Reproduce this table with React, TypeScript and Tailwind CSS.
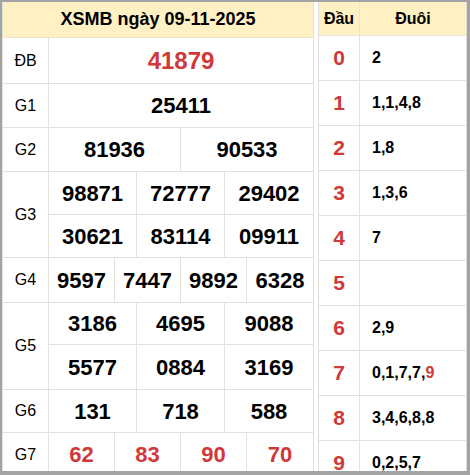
import React from 'react';

const RED = 'text-[#d0383a]';

type Prize = { label: string; rows: string[][]; heights: number[]; red?: boolean; big?: boolean };

const prizes: Prize[] = [
  { label: 'ĐB', rows: [['41879']], heights: [46], red: true, big: true },
  { label: 'G1', rows: [['25411']], heights: [44] },
  { label: 'G2', rows: [['81936', '90533']], heights: [44] },
  { label: 'G3', rows: [['98871', '72777', '29402'], ['30621', '83114', '09911']], heights: [43, 43] },
  { label: 'G4', rows: [['9597', '7447', '9892', '6328']], heights: [45] },
  { label: 'G5', rows: [['3186', '4695', '9088'], ['5577', '0884', '3169']], heights: [42, 45] },
  { label: 'G6', rows: [['131', '718', '588']], heights: [43] },
  { label: 'G7', rows: [['62', '83', '90', '70']], heights: [44], red: true },
];

const cols: Record<number, string> = {
  1: 'grid-cols-1',
  2: 'grid-cols-2',
  3: 'grid-cols-3',
  4: 'grid-cols-4',
};

const loto: { head: string; tail: React.ReactNode }[] = [
  { head: '0', tail: '2' },
  { head: '1', tail: '1,1,4,8' },
  { head: '2', tail: '1,8' },
  { head: '3', tail: '1,3,6' },
  { head: '4', tail: '7' },
  { head: '5', tail: '' },
  { head: '6', tail: '2,9' },
  { head: '7', tail: <>0,1,7,7,<span className={RED}>9</span></> },
  { head: '8', tail: '3,4,6,8,8' },
  { head: '9', tail: '0,2,5,7' },
];

export default function App() {
  return (
    <div className="w-[470px] h-[475px] overflow-hidden bg-white border-t-2 border-l-2 border-r-[3px] border-b-4 border-[#a3a3a3] flex font-['Liberation_Sans',Arial,sans-serif] text-black">
      {/* Kết quả */}
      <div className="w-[312px] shrink-0 border-x border-[#e4e0da] flex flex-col">
        <div className="h-[36px] shrink-0 bg-[#fff1c4] border-b border-[#ece4d0] flex items-center justify-center font-bold text-[18px]">
          XSMB ngày 09-11-2025
        </div>
        {prizes.map((p) => (
          <div key={p.label} className="flex shrink-0 border-b border-[#e4e0da]">
            <div className="w-[46px] shrink-0 border-r border-[#e4e0da] flex items-center justify-center text-[16px]">
              {p.label}
            </div>
            <div className="flex-1 flex flex-col">
              {p.rows.map((row, ri) => (
                <div
                  key={ri}
                  style={{ height: p.heights[ri] - (ri === p.rows.length - 1 ? 1 : 0) }}
                  className={`grid ${cols[row.length]} ${ri < p.rows.length - 1 ? 'border-b border-[#e4e0da]' : ''}`}
                >
                  {row.map((n, ci) => (
                    <div
                      key={ci}
                      className={`flex items-center justify-center font-bold ${p.big ? 'text-[24px]' : 'text-[22px]'} ${p.red ? RED : ''} ${ci < row.length - 1 ? 'border-r border-[#e4e0da]' : ''}`}
                    >
                      {n}
                    </div>
                  ))}
                </div>
              ))}
            </div>
          </div>
        ))}
      </div>

      <div className="w-[4px] shrink-0" />

      {/* Loto đầu đuôi */}
      <div className="flex-1 border-x border-[#e0dcd6] flex flex-col">
        <div className="h-[34px] shrink-0 bg-[#fff1c4] border-b border-[#ece4d0] flex font-bold text-[16px]">
          <div className="w-[41px] shrink-0 border-r border-[#ece4d0] flex items-center justify-center">Đầu</div>
          <div className="flex-1 flex items-center justify-center">Đuôi</div>
        </div>
        {loto.map((r) => (
          <div key={r.head} className="h-[45px] shrink-0 flex border-b border-[#e4e0da]">
            <div className={`w-[41px] shrink-0 border-r border-[#e4e0da] flex items-center justify-center font-bold text-[21px] ${RED}`}>
              {r.head}
            </div>
            <div className="flex-1 flex items-center pl-[12px] font-bold text-[16px]">{r.tail}</div>
          </div>
        ))}
      </div>
    </div>
  );
}
